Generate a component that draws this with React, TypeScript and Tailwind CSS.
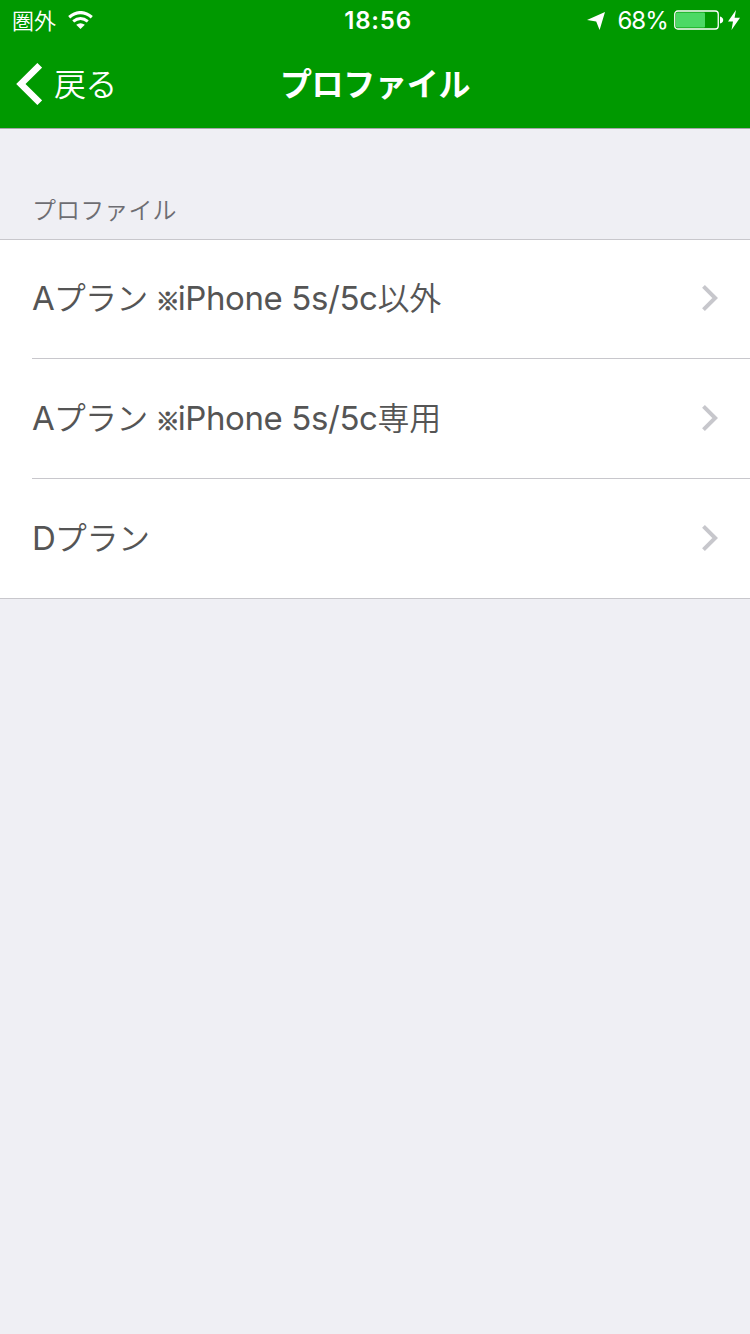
type Segment = { text: string; className: string };

const rows: { id: string; segments: Segment[] }[] = [
  {
    id: 'a-other',
    segments: [
      { text: 'A', className: 'text-[33px]' },
      { text: 'プラン', className: '-ml-px text-[32px] font-[350] tracking-[-0.8px]' },
      { text: ' ', className: 'text-[33px]' },
      { text: '※', className: "-ml-px w-[22px] font-['Noto_Sans_CJK_JP',sans-serif] text-[24px] font-bold leading-6 [-webkit-text-stroke:0.8px_#555555]" },
      { text: 'iPhone 5s/5c', className: 'text-[33px] tracking-[-0.4px]' },
      { text: '以外', className: 'text-[32px] font-[350] tracking-[-0.3px]' },
    ],
  },
  {
    id: 'a-only',
    segments: [
      { text: 'A', className: 'text-[33px]' },
      { text: 'プラン', className: '-ml-px text-[32px] font-[350] tracking-[-0.8px]' },
      { text: ' ', className: 'text-[33px]' },
      { text: '※', className: "-ml-px w-[22px] font-['Noto_Sans_CJK_JP',sans-serif] text-[24px] font-bold leading-6 [-webkit-text-stroke:0.8px_#555555]" },
      { text: 'iPhone 5s/5c', className: 'text-[33px] tracking-[-0.4px]' },
      { text: '専用', className: 'text-[32px] font-[350] tracking-[-0.3px]' },
    ],
  },
  {
    id: 'd',
    segments: [
      { text: 'D', className: 'text-[33px]' },
      { text: 'プラン', className: '-ml-px text-[32px] font-[350] tracking-[-0.4px]' },
    ],
  },
];

const StatusBar = () => (
  <div className="flex h-10 items-center justify-between pl-3 pr-2.5">
    <div className="flex w-[280px] items-center">
      <span className="pt-0.5 text-[22px] font-[350] leading-10">圏外</span>
      <svg className="ml-3 h-[18px] w-[25px]" viewBox="0 0 25 18" fill="none" stroke="white">
        <path d="M1.2 6.2Q12.5 -3 23.8 6.2" strokeWidth="3.2" />
        <path d="M5.2 10.4Q12.5 4.6 19.8 10.4" strokeWidth="3" />
        <path d="M12.5 18L8.2 13.8Q12.5 10.5 16.8 13.8Z" fill="white" stroke="none" />
      </svg>
    </div>
    <span className="pl-1 pt-0.5 text-2xl font-semibold leading-10 tracking-[0.8px]">18:56</span>
    <div className="flex w-[280px] items-center justify-end">
      <svg className="mt-0.5 h-[18px] w-[18px]" viewBox="0 0 18 18" fill="white">
        <path d="M18 0L12.6 18L9.2 9.4L0 8Z" />
      </svg>
      <span className="ml-3 pt-0.5 text-2xl leading-10 tracking-[-0.9px]">68%</span>
      <svg className="ml-1.5 h-5 w-[50px]" viewBox="0 0 50 20" fill="none">
        <rect x="0.75" y="1" width="43.5" height="18" rx="3" stroke="white" strokeWidth="1.3" />
        <rect x="2" y="2.5" width="29" height="15" rx="1" fill="#4cd964" />
        <path d="M46 6.5Q49.2 7.5 49.2 10T46 13.5Z" fill="white" />
      </svg>
      <svg className="ml-1 h-5 w-3" viewBox="0 0 12 20" fill="white">
        <path d="M8 0L0 11.5H5L3.5 20L12 7.8H6.6Z" />
      </svg>
    </div>
  </div>
);

const NavBar = () => (
  <div className="grid h-22 grid-cols-3 items-center">
    <button type="button" className="flex items-center pl-4">
      <svg className="h-[42px] w-[26px]" viewBox="0 0 26 42" fill="none" stroke="white" strokeWidth="6.6">
        <path d="M23.7 2.3L4.9 21L23.7 39.7" />
      </svg>
      <span className="ml-3 pt-0.5 text-[32px] font-[350] leading-10 tracking-[-0.7px]">戻る</span>
    </button>
    <h1 className="pt-0.5 text-center text-[32px] font-bold leading-10 tracking-[-0.3px]">プロファイル</h1>
  </div>
);

export default function App() {
  return (
    <div className="min-h-screen bg-[#efeff4] font-['Inter','Noto_Sans_CJK_JP',sans-serif]">
      <header className="h-[129px] border-b border-[#a7a7aa] bg-[#009900] text-white">
        <StatusBar />
        <NavBar />
      </header>
      <main>
        <h2 className="flex h-[110px] items-end px-8 pb-2.5 text-[24px] font-[350] leading-9 tracking-[0.1px] text-[#6d6d72]">
          プロファイル
        </h2>
        <ul className="border-y border-[#c8c7cc] bg-white text-[#555555]">
          {rows.map(row => (
            <li key={row.id} className="group pl-8">
              <div className="flex h-[120px] items-center justify-between border-b border-[#c8c7cc] pb-px pr-8 group-first:h-[119px] group-first:pb-0.5 group-last:h-[119px] group-last:border-b-0">
                <span className="flex h-10 items-baseline whitespace-pre leading-10">
                  {row.segments.map(segment => (
                    <span key={segment.text} className={segment.className}>{segment.text}</span>
                  ))}
                </span>
                <svg className="h-[26px] w-4" viewBox="0 0 16 26" fill="none" stroke="#c7c7cc" strokeWidth="4">
                  <path d="M1.5 1.4L13.2 13L1.5 24.6" />
                </svg>
              </div>
            </li>
          ))}
        </ul>
      </main>
    </div>
  );
}
